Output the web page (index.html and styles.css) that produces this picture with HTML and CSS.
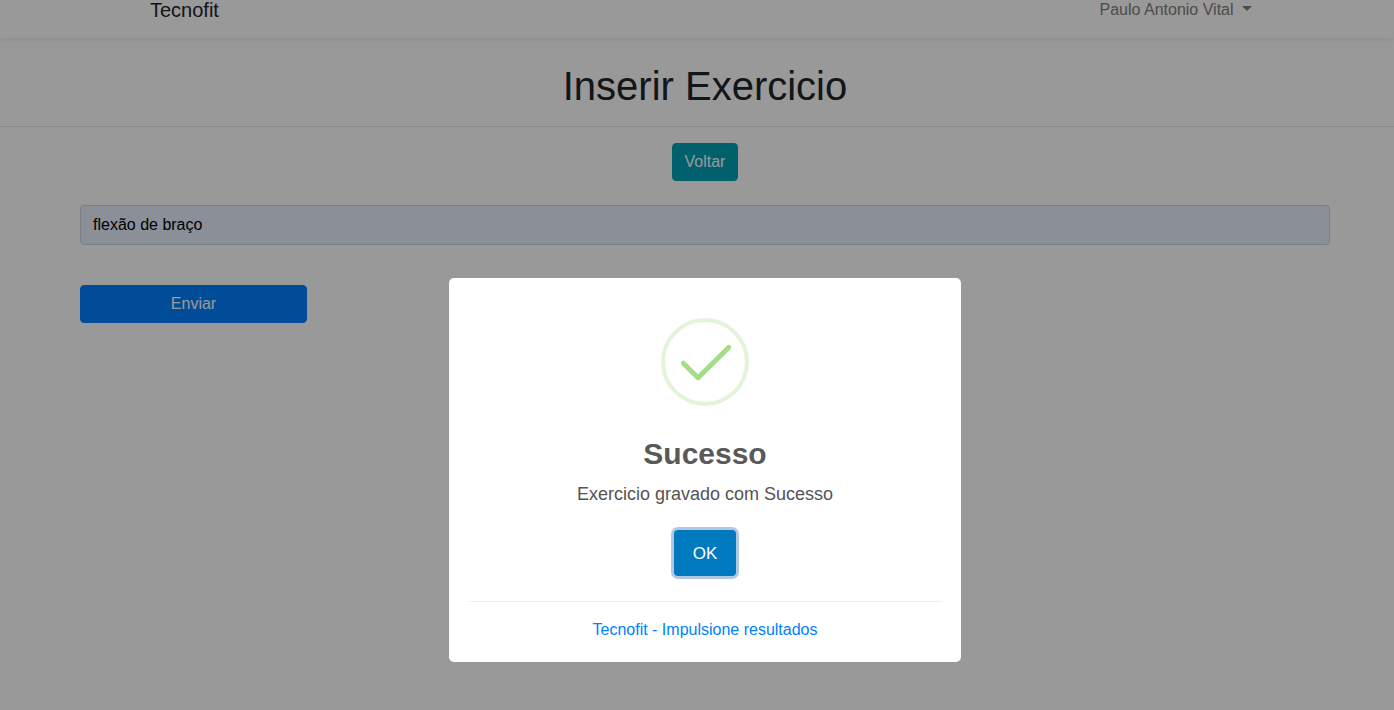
FILE: index.html
```html
<!DOCTYPE html>
<html lang="pt-BR">
<head>
<meta charset="utf-8">
<title>Tecnofit</title>
<link rel="stylesheet" href="styles.css">
</head>
<body>
<header class="navbar">
  <div class="navbar-inner">
    <a class="brand" href="#">Tecnofit</a>
    <button class="user-menu" type="button">Paulo Antonio Vital <span class="caret"></span></button>
  </div>
</header>
<main>
  <h1 class="page-title">Inserir Exercicio</h1>
  <hr class="rule">
  <div class="back-row"><a class="btn btn-info" href="#">Voltar</a></div>
  <form class="exercise-form">
    <input class="field" type="text" aria-label="Exercicio" value="flexão de braço">
    <button class="btn btn-primary" type="button">Enviar</button>
  </form>
</main>
<div class="overlay">
  <div class="modal" role="dialog" aria-modal="true" aria-labelledby="modal-title">
    <svg class="success-icon" viewBox="0 0 88 88" aria-hidden="true">
      <circle cx="44" cy="44" r="42" fill="none" stroke="#a5dc86" stroke-opacity=".3" stroke-width="4"/>
      <path d="M22.3 45.2 37 59.7 67.7 29.5" fill="none" stroke="#a5dc86" stroke-width="5" stroke-linecap="round" stroke-linejoin="round"/>
    </svg>
    <h2 class="modal-title" id="modal-title">Sucesso</h2>
    <p class="modal-text">Exercicio gravado com Sucesso</p>
    <button class="confirm" type="button">OK</button>
    <div class="modal-footer"><a class="footer-link" href="#">Tecnofit - Impulsione resultados</a></div>
  </div>
</div>
</body>
</html>
```

FILE: styles.css
```css
* { box-sizing: border-box; }

body {
  margin: 0;
  min-height: 100vh;
  background: #fff;
  color: #212529;
  font-family: "Liberation Sans", Arial, sans-serif;
  font-size: 16px;
  line-height: 24px;
}

a { text-decoration: none; }
button, input { font: inherit; }

.navbar {
  padding: 0 0 18px 16px;
  background: #fff;
  box-shadow: 0 2px 4px rgba(0, 0, 0, .075);
}

.navbar-inner {
  display: flex;
  align-items: center;
  justify-content: space-between;
  max-width: 1140px;
  margin: 0 auto;
  padding: 0 23px 0 15px;
}

.brand {
  color: #212529;
  font-size: 20px;
  line-height: 20px;
}

.user-menu {
  padding: 0;
  border: 0;
  background: none;
  color: #7f7f7f;
  line-height: 20px;
}

.caret {
  display: inline-block;
  margin-left: 4px;
  vertical-align: 4px;
  border-top: 5px solid;
  border-right: 5px solid transparent;
  border-left: 5px solid transparent;
}

.page-title {
  margin: 24px 0 16px;
  padding-left: 16px;
  font-size: 40px;
  font-weight: 400;
  line-height: 48px;
  text-align: center;
}

.rule {
  margin: 0 0 16px;
  border: 0;
  border-top: 1px solid rgba(0, 0, 0, .1);
}

.back-row {
  display: flex;
  justify-content: center;
  padding-left: 16px;
}

.btn {
  padding: 6px 12px;
  border: 1px solid;
  border-radius: 4px;
  color: #fff;
  text-align: center;
}

.btn-info { background: #00a2b5; border-color: #00a2b5; }
.btn-primary { width: 227px; background: #007fff; border-color: #007fff; }

.exercise-form {
  display: flex;
  flex-direction: column;
  align-items: flex-start;
  gap: 40px;
  padding: 24px 64px 0 80px;
}

.field {
  width: 100%;
  height: 40px;
  padding: 6px 12px;
  border: 1px solid #ced4da;
  border-radius: 4px;
  background: #e8f0fe;
  color: #000;
}

.overlay {
  position: fixed;
  inset: 0;
  display: flex;
  align-items: flex-start;
  justify-content: center;
  padding: 278px 0 0 16px;
  background: rgba(0, 0, 0, .4);
}

.modal {
  display: flex;
  flex-direction: column;
  align-items: center;
  width: 512px;
  padding: 40px 20px 20px;
  border-radius: 5px;
  background: #fff;
}

.success-icon { width: 88px; height: 88px; }

.modal-title {
  margin: 30px 0 12px;
  color: #595959;
  font-size: 30px;
  font-weight: 700;
  line-height: 36px;
}

.modal-text {
  margin: 0 0 26px;
  color: #545454;
  font-size: 18px;
  line-height: 20px;
}

.confirm {
  padding: 12px 19px 10px;
  border: 0;
  border-radius: 4px;
  background: #0079bf;
  box-shadow: 0 0 0 3px #b0c9e0;
  color: #fff;
  font-size: 17px;
}

.modal-footer {
  align-self: stretch;
  margin-top: 25px;
  padding-top: 16px;
  border-top: 1px solid #eee;
  text-align: center;
}

.footer-link { color: #0080ff; }
```
